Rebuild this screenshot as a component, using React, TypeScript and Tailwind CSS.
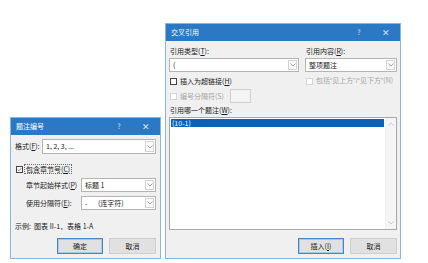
import React from "react";

const FONT = { fontFamily: '"Noto Sans CJK SC", "Noto Sans", sans-serif' };
const LAT = { fontFamily: '"Liberation Sans", "Noto Sans", sans-serif' };

function Chevron({ up = false, color = "#8a8a8a" }: { up?: boolean; color?: string }) {
  return (
    <svg width="6" height="4" viewBox="0 0 6 4">
      <path d={up ? "M0.5 3.5 L3 1 L5.5 3.5" : "M0.5 0.5 L3 3 L5.5 0.5"} fill="none" stroke={color} strokeWidth="0.8" />
    </svg>
  );
}

function Select({ text, h = "h-[14px]", w }: { text: React.ReactNode; h?: string; w: string }) {
  return (
    <div className={`flex shrink-0 ${h} ${w} border border-[#b4b4b4] bg-white`}>
      <div className="flex flex-1 items-center pl-[3px] text-[7px] text-[#1a1a1a]">{text}</div>
      <div className="my-[1px] mr-[1px] flex w-[9px] items-center justify-center border border-[#d4d4d4] bg-[#fafafa]">
        <Chevron />
      </div>
    </div>
  );
}

function TitleBar({ title }: { title: string }) {
  return (
    <div className="flex h-[17px] shrink-0 items-center bg-[#2b78c4] pl-[5px] text-[7px] text-white">
      <span className="flex-1">{title}</span>
      <span className="w-[26px] text-center text-[7px] text-[#cfe1f3]">?</span>
      <span className="w-[28px] text-center text-[9px] font-light text-[#d8e7f5]">✕</span>
    </div>
  );
}

function Button({ label, primary = false }: { label: React.ReactNode; primary?: boolean }) {
  return (
    <div
      className={`flex h-[16px] items-center justify-center bg-[#e1e1e1] text-[7px] text-[#1a1a1a] ${
        primary ? "w-[46px] border border-[#4a86c6] shadow-[inset_0_0_0_1px_#a9c8e8]" : "w-[47px] border border-[#cfcfcf]"
      }`}
    >
      {label}
    </div>
  );
}

function Box({ checked = false, disabled = false }: { checked?: boolean; disabled?: boolean }) {
  return (
    <div
      className={`flex h-[7px] w-[7px] shrink-0 items-center justify-center border bg-white ${
        disabled ? "border-[#d6d6d6]" : "border-[#444444]"
      }`}
    >
      {checked && (
        <svg width="5" height="5" viewBox="0 0 5 5">
          <path d="M0.7 2.5 L2 3.8 L4.3 1.1" fill="none" stroke="#444" strokeWidth="0.7" />
        </svg>
      )}
    </div>
  );
}

function LeftDialog() {
  return (
    <div className="flex h-[142px] w-[151px] flex-col border border-[#8ab4dc] bg-[#f0f0f0]">
      <TitleBar title="题注编号" />
      <div className="flex flex-col px-[4px] text-[7px] text-[#1a1a1a]">
        <div className="mt-[4px] flex h-[15px] items-center">
          <span className="w-[28px]">
            格式(<u>F</u>):
          </span>
          <Select text="1, 2, 3, ..." h="h-[15px]" w="w-[114px]" />
        </div>
        <div className="mt-[10px] flex h-[10px] items-center pl-[1px]">
          <Box checked />
          <span className="ml-[1px] flex h-[10px] items-center border border-dotted border-[#666] px-[1px]">
            包含章节号(<u>C</u>)
          </span>
        </div>
        <div className="mt-[4px] flex h-[14px] items-center pl-[11px]">
          <span className="w-[56px]">
            章节起始样式(<u>P</u>)
          </span>
          <Select text="标题 1" w="w-[75px]" />
        </div>
        <div className="mt-[4px] flex h-[14px] items-center pl-[11px]">
          <span className="w-[56px]">
            使用分隔符(<u>E</u>):
          </span>
          <Select
            text={
              <>
                <span className="w-[13px]">-</span>(连字符)
              </>
            }
            w="w-[75px]"
          />
        </div>
        <div className="mt-[11px] flex h-[10px] items-center">示例:&nbsp; 图表 II-1，表格 1-A</div>
        <div className="mt-[7px] flex justify-end gap-[6px]">
          <Button label="确定" primary />
          <Button label="取消" />
        </div>
      </div>
    </div>
  );
}

function RightDialog() {
  return (
    <div className="flex h-[236px] w-[236px] flex-col border border-[#8ab4dc] bg-[#f0f0f0]">
      <TitleBar title="交叉引用" />
      <div className="flex flex-col px-[3px] text-[7px] text-[#1a1a1a]">
        <div className="flex gap-[6px]">
          <div className="flex w-[130px] flex-col">
            <div className="mt-[5px] flex h-[10px] items-center pl-[1px]">
              引用类型(<u>T</u>):
            </div>
            <div className="mt-[2px]">
              <Select text="(" w="w-[130px]" />
            </div>
            <div className="mt-[4px] flex h-[10px] items-center pl-[1px]">
              <Box />
              <span className="ml-[3px]">
                插入为超链接(<u>H</u>)
              </span>
            </div>
            <div className="mt-[3px] flex h-[14px] items-center pl-[1px] text-[#a6a6a6]">
              <Box disabled />
              <span className="ml-[3px] w-[50px]">编号分隔符(S)</span>
              <div className="h-[14px] w-[21px] border border-[#cfcfcf] bg-[#f4f4f4]" />
            </div>
          </div>
          <div className="flex w-[92px] flex-col">
            <div className="mt-[5px] flex h-[10px] items-center pl-[1px]">
              引用内容(<u>R</u>):
            </div>
            <div className="mt-[2px]">
              <Select text="整项题注" w="w-[92px]" />
            </div>
            <div className="mt-[4px] flex h-[10px] items-center pl-[1px] text-[#a6a6a6]">
              <Box disabled />
              <span className="ml-[3px] whitespace-nowrap text-[7px]">
                包括<span style={LAT}>“</span>见上方<span style={LAT}>”/“</span>见下方<span style={LAT}>”</span>(N)
              </span>
            </div>
          </div>
        </div>
        <div className="mt-[2px] flex h-[10px] items-center pl-[1px]">
          引用哪一个题注(<u>W</u>):
        </div>
        <div className="mt-[2px] flex h-[113px] border border-[#a8a8a8] bg-white">
          <div className="flex flex-1 flex-col p-[1px]">
            <div className="flex h-[8px] items-center bg-[#0a63b8] pl-[1px] text-[7px] text-white">(10-1)</div>
          </div>
          <div className="flex w-[11px] flex-col items-center justify-between border-l border-[#f0f0f0] bg-[#f5f5f5] py-[4px]">
            <Chevron up color="#c0c0c0" />
            <Chevron color="#c0c0c0" />
          </div>
        </div>
        <div className="mt-[8px] flex justify-end gap-[6px]">
          <Button
            label={
              <>
                插入(<u>I</u>)
              </>
            }
            primary
          />
          <Button label="取消" />
        </div>
      </div>
    </div>
  );
}

export default function App() {
  return (
    <div className="h-[263px] w-[428px] bg-white" style={FONT}>
      <div className="flex items-end gap-[4px] pl-[10px] pt-[23px]">
        <LeftDialog />
        <RightDialog />
      </div>
    </div>
  );
}
